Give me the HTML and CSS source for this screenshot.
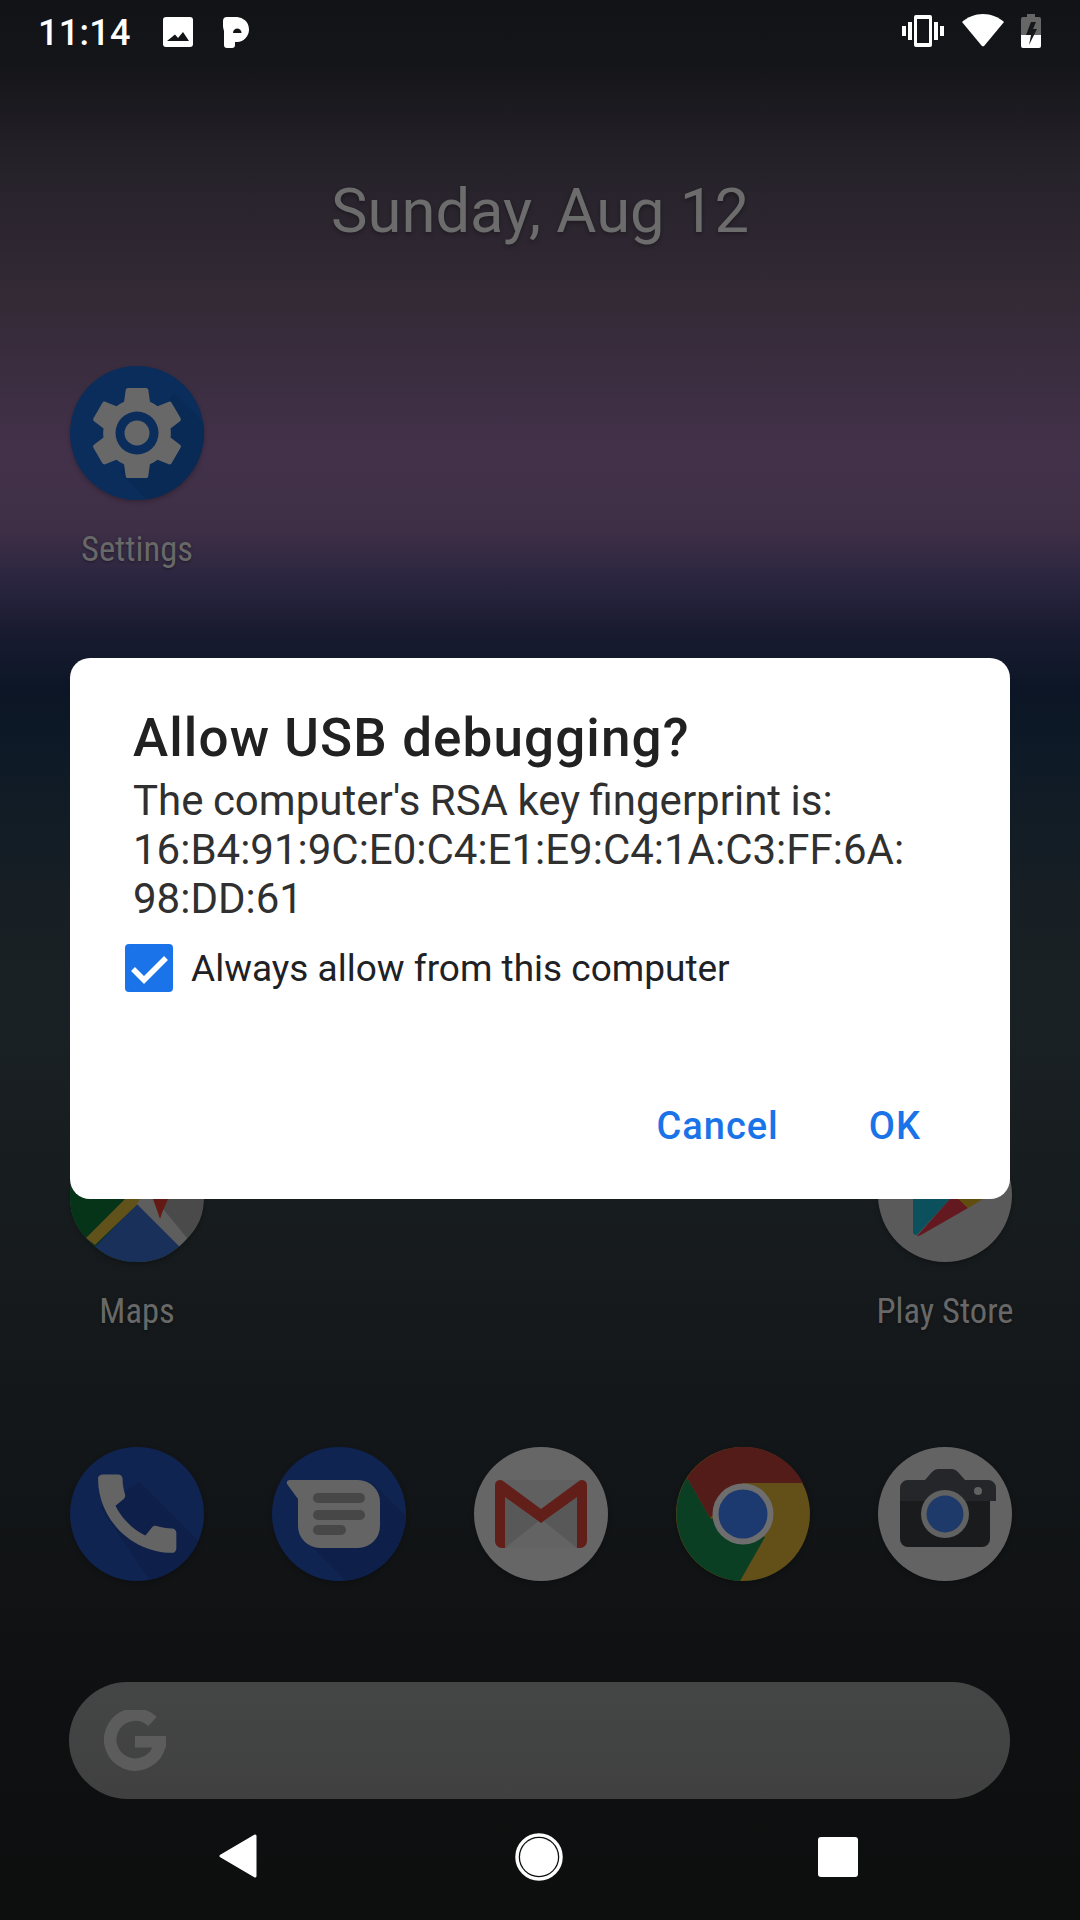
FILE: index.html
```html
<!DOCTYPE html>
<html lang="en">
<head>
<meta charset="utf-8">
<title>Allow USB debugging</title>
<link rel="stylesheet" href="styles.css">
</head>
<body>
<div class="screen">
  <header class="status">
    <span class="time">11:14</span>
    <svg class="st-photo" viewBox="0 0 30 30"><path fill="#fff" fill-rule="evenodd" d="M3 0h24a3 3 0 0 1 3 3v24a3 3 0 0 1-3 3H3a3 3 0 0 1-3-3V3a3 3 0 0 1 3-3zM4 24h22l-6-9-5 6-3-3.500z"/></svg>
    <svg class="st-p" viewBox="0 0 27 31"><path fill="#fff" fill-rule="evenodd" d="M0 4a4 4 0 0 1 4-4h9a12.500 12.500 0 0 1 1 25h-2v3a3 3 0 0 1-3 3H4a3 3 0 0 1-3-3V14q-1-3-1-5zM10 16h8.500c0-6-8.500-6-8.500 0z"/></svg>
    <span class="status-gap"></span>
    <svg class="st-vib" viewBox="0 0 42 32"><path fill="#fff" fill-rule="evenodd" d="M0 11h4v10H0zM6 7h4v18H6zM32 7h4v18h-4zM38 11h4v10h-4zM14 0h14a2 2 0 0 1 2 2v28a2 2 0 0 1-2 2H14a2 2 0 0 1-2-2V2a2 2 0 0 1 2-2zM15 4v24h12V4z"/></svg>
    <svg class="st-wifi" viewBox="0 0 42 33"><path fill="#fff" d="M0 8C5.500 3 13 0 21 0s15.500 3 21 8L22.500 31.500a2 2 0 0 1-3 0z"/></svg>
    <svg class="st-batt" viewBox="0 0 20 34"><path fill="#666" d="M6 0h8v3h4a2 2 0 0 1 2 2v16H0V5a2 2 0 0 1 2-2h4z"/><path fill="#fff" d="M0 21h20v11a2 2 0 0 1-2 2H2a2 2 0 0 1-2-2z"/><path fill="#15171a" d="M10 8h5l-3 7h4L8 31l2-10H5z"/></svg>
  </header>

  <main class="home">
    <h2 class="date">Sunday, Aug 12</h2>

    <section class="apps apps-top">
      <div class="app">
        <svg class="app-icon" viewBox="0 0 134 134">
          <defs><clipPath id="round"><circle cx="67" cy="67" r="67"/></clipPath></defs>
          <circle cx="67" cy="67" r="67" fill="#0a2d5b"/>
          <path clip-path="url(#round)" fill="#092a55" d="M104 27l40 40v67H77L50 106z"/>
          <g transform="translate(10.600 10.600) scale(4.700)"><path fill="#686868" d="M19.140 12.940c.04-.3.06-.61.06-.94 0-.32-.02-.64-.07-.94l2.030-1.580c.18-.14.23-.41.12-.61l-1.920-3.320c-.12-.22-.37-.29-.59-.22l-2.390.96c-.5-.38-1.030-.7-1.620-.94l-.36-2.540c-.04-.24-.24-.41-.48-.41h-3.840c-.24 0-.43.17-.47.41l-.36 2.540c-.59.24-1.130.57-1.620.94l-2.390-.96c-.22-.08-.47 0-.59.22L2.740 8.870c-.12.21-.08.47.12.61l2.030 1.580c-.05.3-.09.63-.09.94s.02.64.07.94l-2.030 1.580c-.18.14-.23.41-.12.61l1.920 3.320c.12.22.37.29.59.22l2.390-.96c.5.38 1.030.7 1.620.94l.36 2.540c.05.24.24.41.48.41h3.840c.24 0 .44-.17.47-.41l.36-2.540c.59-.24 1.130-.56 1.620-.94l2.390.96c.22.08.47 0 .59-.22l1.920-3.320c.12-.22.07-.47-.12-.61l-2.010-1.580z"/></g>
          <circle cx="67" cy="67" r="21.500" fill="#0a2d5b"/>
          <circle cx="67" cy="67" r="12.500" fill="#686868"/>
        </svg>
        <span class="app-label">Settings</span>
      </div>
    </section>

    <section class="apps apps-mid">
      <div class="app">
        <svg class="app-icon" viewBox="0 0 134 134">
          <defs><clipPath id="maps-clip"><path d="M67 0C104 0 134 30 134 67c0 20-5 32-20 47-13 13-27 20-47 20s-34-7-47-20C5 99 0 87 0 67 0 30 30 0 67 0z"/></clipPath></defs>
          <g clip-path="url(#maps-clip)">
            <rect width="134" height="134" fill="#4a4a4a"/>
            <rect width="67" height="134" fill="#053419"/>
            <path fill="#18305a" d="M-30 175L67 76l124 124z"/>
            <path fill="#61521c" d="M55 71h15l3 0-48 46-9-7z"/>
            <path fill="#5e5e5e" d="M70 71h15l32 39-7 9-43-43z"/>
            <path fill="#641a14" d="M83 71h15l-6 14-2 6-2-6z"/>
          </g>
        </svg>
        <span class="app-label">Maps</span>
      </div>
      <div class="app app-last">
        <svg class="app-icon" viewBox="0 0 134 134">
          <circle cx="67" cy="67" r="67" fill="#5a5a5a"/>
          <path fill="#0b505d" d="M35 60h37v11L39 107q-4 0-4-3z"/>
          <path fill="#63191f" d="M39 108L72 71h9l9 9-47 27q-3 1.500-4 1z"/>
          <path fill="#614d0e" d="M80 71h25L90 80z"/>
        </svg>
        <span class="app-label">Play Store</span>
      </div>
    </section>

    <section class="apps apps-dock">
      <svg class="app-icon" viewBox="0 0 134 134">
        <circle cx="67" cy="67" r="67" fill="#102452"/>
        <path clip-path="url(#round)" fill="#0e204a" d="M70 35l74 74v25H80L30 60z"/>
        <g transform="translate(15 14.500) scale(4.350)"><path fill="#646464" d="M20.010 15.380c-1.230 0-2.420-.2-3.530-.56a.977.977 0 0 0-1.010.24l-1.570 1.970c-2.830-1.350-5.480-3.900-6.890-6.830l1.950-1.660c.27-.28.35-.67.24-1.020-.37-1.110-.56-2.300-.56-3.530 0-.54-.45-.99-.99-.99H4.190C3.650 3 3 3.240 3 3.990 3 13.280 10.730 21 20.010 21c.71 0 .99-.63.99-1.180v-3.450c0-.54-.45-.99-.99-.99z"/></g>
      </svg>
      <svg class="app-icon" viewBox="0 0 134 134">
        <circle cx="67" cy="67" r="67" fill="#102452"/>
        <path clip-path="url(#round)" fill="#0e204a" d="M100 35l44 44v55H74L30 90z"/>
        <path fill="#646464" d="M18 33h68a22 22 0 0 1 22 22v24a22 22 0 0 1-22 22H48a22 22 0 0 1-22-22V52L15 37q-1-4 3-4z"/>
        <g fill="#474747">
          <rect x="41" y="46" width="52" height="10" rx="5"/>
          <rect x="41" y="63" width="52" height="10" rx="5"/>
          <rect x="41" y="78" width="33" height="10" rx="5"/>
        </g>
      </svg>
      <svg class="app-icon" viewBox="0 0 134 134">
        <circle cx="67" cy="67" r="67" fill="#666"/>
        <path fill="#606060" d="M25 33h84v68H25z"/>
        <path fill="#585858" d="M31 50l36 27 36-27v51H31z"/>
        <path fill="#636363" d="M31 101l36-29 36 29z"/>
        <path fill="#621e19" d="M21 38a5 5 0 0 1 8-4l38 28 38-28a5 5 0 0 1 8 4v56a7 7 0 0 1-7 7h-3V50L67 76 31 50v51h-3a7 7 0 0 1-7-7z"/>
      </svg>
      <svg class="app-icon" viewBox="0 0 134 134">
        <circle cx="67" cy="67" r="67" fill="#634f18"/>
        <path fill="#531c18" d="M67 36h60A67 67 0 0 0 11 31l23 40z"/>
        <path fill="#0a3f24" d="M11 31A67 67 0 0 0 64 134l25-44-55-19z"/>
        <circle cx="67" cy="67" r="30.500" fill="#6e6e6e"/>
        <circle cx="67" cy="67" r="24.500" fill="#1d3a70"/>
      </svg>
      <svg class="app-icon" viewBox="0 0 134 134">
        <circle cx="67" cy="67" r="67" fill="#636363"/>
        <path fill="#1a1b1d" d="M22 54h90v38a8 8 0 0 1-8 8H30a8 8 0 0 1-8-8z"/>
        <path fill="#252629" d="M30 33h17l7-8q3-3 6-3h14q3 0 6 3l7 8h23a8 8 0 0 1 8 8v13H22V41a8 8 0 0 1 8-8z"/>
        <circle cx="67" cy="67" r="24" fill="#626262"/>
        <circle cx="67" cy="67" r="18.500" fill="#1e3a6b"/>
        <circle cx="100" cy="44" r="4" fill="#626262"/>
      </svg>
    </section>

    <div class="search">
      <svg class="g-logo" viewBox="0 0 62 62"><path fill="none" stroke="#5c5c5c" stroke-width="12.500" d="M48.500 11.500A25 25 0 1 0 55.800 34"/><rect x="31" y="26" width="31" height="11.500" fill="#5c5c5c"/></svg>
    </div>
  </main>

  <nav class="navbar">
    <svg class="nav-back" viewBox="0 0 38 44"><path fill="#fff" stroke="#fff" stroke-width="3" stroke-linejoin="round" d="M36 2v40L2 22z"/></svg>
    <svg class="nav-home" viewBox="0 0 48 48"><circle cx="24" cy="24" r="22" fill="none" stroke="#fff" stroke-width="3.500"/><circle cx="24" cy="24" r="19" fill="#fff"/></svg>
    <span class="nav-recent"></span>
  </nav>

  <div class="dialog" role="dialog">
    <h1 class="dialog-title">Allow USB debugging?</h1>
    <p class="dialog-body">The computer's RSA key fingerprint is:<br>16:B4:91:9C:E0:C4:E1:E9:C4:1A:C3:FF:6A:<br>98:DD:61</p>
    <label class="check-row">
      <svg class="check" viewBox="0 0 48 48"><rect width="48" height="48" rx="4" fill="#1a73e8"/><path fill="none" stroke="#fff" stroke-width="5.500" d="M8 25l11 11 22-22"/></svg>
      <span>Always allow from this computer</span>
    </label>
    <div class="dialog-actions">
      <button class="btn">Cancel</button>
      <button class="btn">OK</button>
    </div>
  </div>
</div>
</body>
</html>
```

FILE: styles.css
```css
* { box-sizing: border-box; }
html, body { margin: 0; padding: 0; }
body { width: 1080px; height: 1920px; overflow: hidden; font-family: Roboto, sans-serif; }

.screen {
  position: relative;
  width: 1080px;
  height: 1920px;
  display: flex;
  flex-direction: column;
  background: linear-gradient(180deg,
    #111316 0, #141518 60px, #26222a 170px, #332a36 300px, #43314a 450px,
    #3e2f46 530px, #2b2540 580px, #191b30 630px, #0c1626 690px, #0e1a26 760px,
    #171f24 900px, #1a2124 1000px, #171c1e 1200px, #121517 1500px, #0f1011 1700px, #0d0e0e 1920px);
}

/* status bar */
.status { height: 63px; display: flex; align-items: flex-start; padding: 0 39px 0 38px; color: #fff; }
.time { font-size: 36px; font-weight: 500; line-height: 36px; margin-top: 15px; letter-spacing: .3px; width: 125px; }
.status svg { display: block; flex: none; }
.st-photo { width: 30px; height: 30px; margin-top: 17px; }
.st-p { width: 27px; height: 31px; margin: 17px 0 0 30px; }
.status-gap { flex: 1; }
.st-vib { width: 42px; height: 32px; margin-top: 15px; }
.st-wifi { width: 42px; height: 33px; margin: 14px 0 0 18px; }
.st-batt { width: 20px; height: 34px; margin: 14px 0 0 17px; }

/* home */
.home { flex: 1; display: flex; flex-direction: column; padding: 0 68px 0 70px; }
.date {
  margin: 108px -68px 0 -70px;
  text-align: center;
  font-weight: 400;
  font-size: 61.500px;
  line-height: 80px;
  color: #6c6c6c;
  text-shadow: 0 2px 4px rgba(0,0,0,.3);
}
.apps { display: grid; grid-template-columns: repeat(5, 134px); column-gap: 68px; }
.apps-top { margin-top: 115px; }
.apps-mid { margin-top: 559px; }
.apps-dock { margin-top: 116px; }
.app { width: 134px; display: flex; flex-direction: column; align-items: center; }
.app-last { grid-column: 5; }
.app-icon { width: 134px; height: 134px; display: block; filter: drop-shadow(0 2px 2px rgba(0,0,0,.25)); }
.app-label {
  margin-top: 29px;
  font-size: 34.500px;
  line-height: 40px;
  white-space: nowrap;
  font-stretch: 75%;
  color: #686868;
  text-shadow: 0 1px 3px rgba(0,0,0,.4);
}
.search {
  margin: 101px 2px 0 -1px;
  height: 117px;
  border-radius: 59px;
  background: linear-gradient(180deg, #444645, #404040);
  display: flex;
  align-items: center;
  padding-left: 35px;
}
.g-logo { width: 62px; height: 62px; display: block; }

/* nav */
.navbar { height: 121px; display: grid; grid-template-columns: 219px 38px 258px 48px 255px 40px; align-items: center; }
.nav-back { grid-column: 2; width: 38px; height: 44px; display: block; margin-top: -7px; }
.nav-home { grid-column: 4; width: 48px; height: 48px; display: block; margin-top: -6px; }
.nav-recent { grid-column: 6; width: 40px; height: 40px; margin-top: -6px; border-radius: 3px; background: #fff; }

/* dialog */
.dialog {
  position: absolute;
  left: 70px;
  top: 658px;
  width: 940px;
  height: 541px;
  background: #fff;
  border-radius: 20px;
  padding: 47px 55px 0 63px;
  display: flex;
  flex-direction: column;
}
.dialog-title { margin: 0; font-size: 53px; letter-spacing: 1.100px; line-height: 66px; font-weight: 500; color: #212121; }
.dialog-body { margin: 5px 0 0; font-size: 42px; word-spacing: -1px; line-height: 49px; color: #303030; }
.check-row { display: flex; align-items: center; margin: 21px 0 0 -8px; font-size: 37px; color: #202124; }
.check { width: 48px; height: 48px; margin-right: 18px; display: block; }
.dialog-actions { margin-top: auto; padding: 0 34px 51px 0; display: flex; justify-content: flex-end; gap: 90px; }
.btn { border: 0; padding: 0; background: none; font-family: Roboto, sans-serif; font-size: 38px; letter-spacing: 1px; font-weight: 500; line-height: 44px; color: #1a73e8; }
```
